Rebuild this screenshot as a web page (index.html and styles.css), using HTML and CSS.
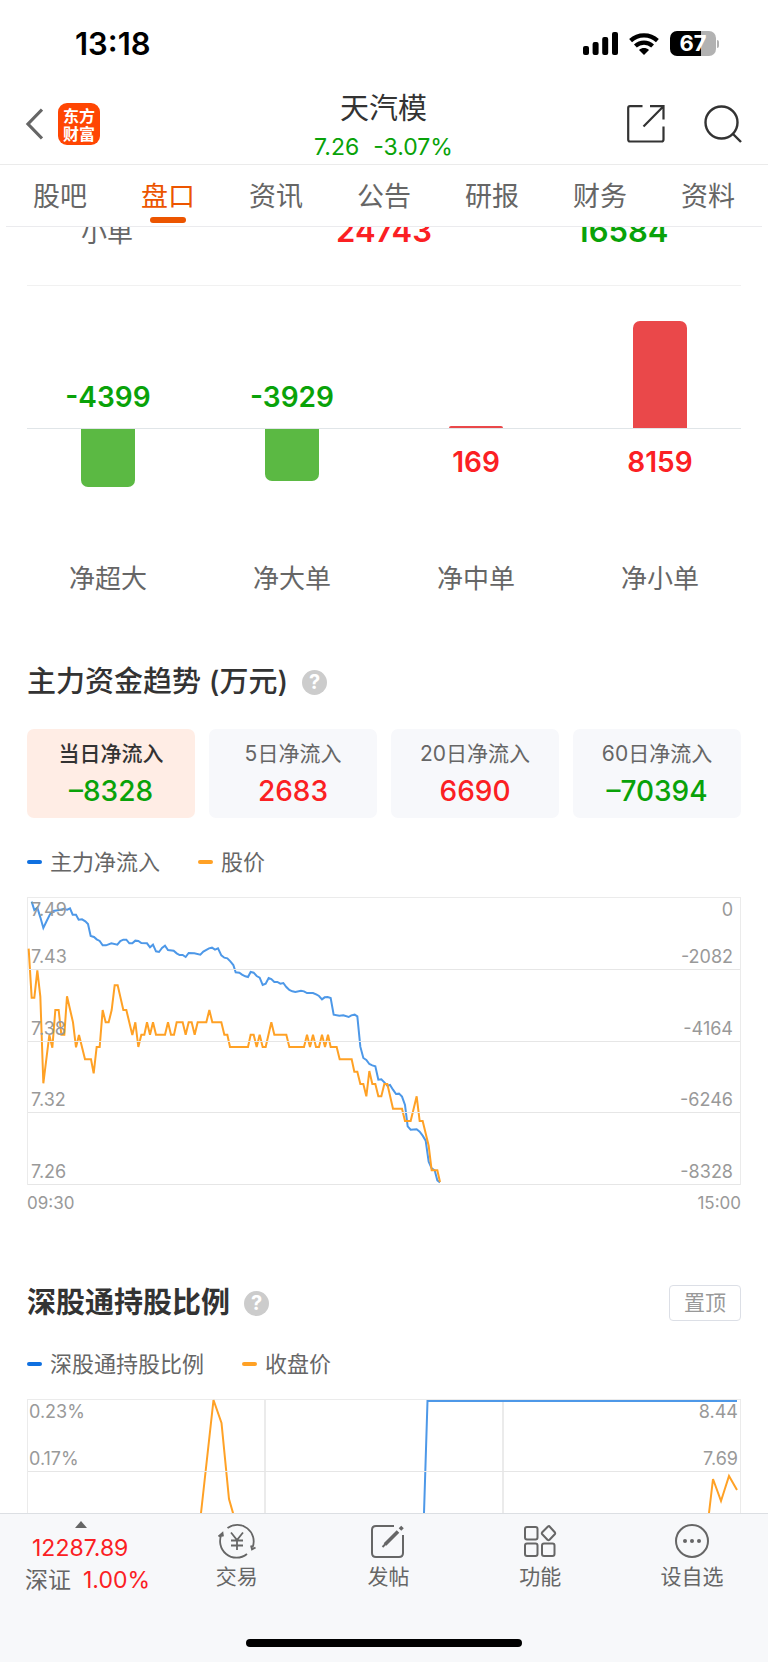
FILE: index.html
```html
<!DOCTYPE html>
<html lang="zh-CN">
<head>
<meta charset="utf-8">
<meta name="viewport" content="width=device-width, initial-scale=1">
<title>天汽模 盘口</title>
<link rel="stylesheet" href="styles.css">
</head>
<body>
<div class="app">
  <div class="status">
    <time class="status-time">13:18</time>
    <div class="status-icons">
      <svg width="35" height="23" viewBox="0 0 35 23" aria-hidden="true">
        <rect x="0" y="14" width="6" height="9" rx="2"/><rect x="9.6" y="10" width="6" height="13" rx="2"/><rect x="19.2" y="5" width="6" height="18" rx="2"/><rect x="29" y="0" width="6" height="23" rx="2"/>
      </svg>
      <svg width="30" height="22" viewBox="0 0 30 22" aria-hidden="true">
        <g fill="none" stroke="#000" stroke-width="4.2"><path d="M1.6 7.6C9 .6 21 .6 28.400 7.6"/><path d="M6.4 13C11.3 8.600 18.700 8.600 23.600 13"/></g>
        <path d="M10 17C13 14.400 17 14.400 20 17L15 22Z"/>
      </svg>
      <div class="battery"><span class="battery-body">67</span><span class="battery-tip"></span></div>
    </div>
  </div>

  <header class="header">
    <div class="header-left">
      <button class="icon-btn" aria-label="返回">
        <svg width="18" height="32" viewBox="0 0 18 32" fill="none" stroke="#666" stroke-width="3.200"><path d="M17 1.500 3 16 17 30.500"/></svg>
      </button>
      <div class="logo">东方<br>财富</div>
    </div>
    <div class="header-title">
      <h1 class="stock-name">天汽模</h1>
      <p class="stock-quote"><span>7.26</span><span>-3.07%</span></p>
    </div>
    <div class="header-right">
      <button class="icon-btn" aria-label="分享">
        <svg width="38" height="38" viewBox="0 0 38 38" fill="none" stroke="#333" stroke-width="2.200"><path d="M15.500 1.200H3Q1.200 1.200 1.200 3V34.500Q1.200 36.500 3 36.500H34.500Q36.500 36.500 36.500 34.500V21.500M23 1.200H36.500V14.500M36.500 1.200 16.500 21.500"/></svg>
      </button>
      <button class="icon-btn" aria-label="搜索">
        <svg width="38" height="38" viewBox="0 0 38 38" fill="none" stroke="#333" stroke-width="2.400"><circle cx="17.500" cy="17.500" r="16"/><path d="M28.500 28.500 37 37"/></svg>
      </button>
    </div>
  </header>

  <nav class="tabs">
    <a class="tab" href="#">股吧</a>
    <a class="tab tab-active" href="#">盘口</a>
    <a class="tab" href="#">资讯</a>
    <a class="tab" href="#">公告</a>
    <a class="tab" href="#">研报</a>
    <a class="tab" href="#">财务</a>
    <a class="tab" href="#">资料</a>
  </nav>

  <main class="content">
    <div class="order-row">
      <span class="order-label">小单</span>
      <span class="order-value up">24743</span>
      <span class="order-value down">16584</span>
    </div>

    <section class="net">
      <div class="net-upper">
        <div class="net-cols">
          <div class="net-cell"><span class="net-value down">-4399</span></div>
          <div class="net-cell"><span class="net-value down">-3929</span></div>
          <div class="net-cell"><span class="bar bar-up" style="height:2px"></span></div>
          <div class="net-cell"><span class="bar bar-up" style="height:107px"></span></div>
        </div>
      </div>
      <div class="net-lower">
        <div class="net-cols">
          <div class="net-cell"><span class="bar bar-down" style="height:58px"></span></div>
          <div class="net-cell"><span class="bar bar-down" style="height:52px"></span></div>
          <div class="net-cell"><span class="net-value up">169</span></div>
          <div class="net-cell"><span class="net-value up">8159</span></div>
        </div>
      </div>
      <div class="net-cols net-names">
        <span>净超大</span><span>净大单</span><span>净中单</span><span>净小单</span>
      </div>
    </section>

    <section class="section">
      <div class="section-head">
        <h2 class="section-title">主力资金趋势 (万元)</h2>
        <button class="help" aria-label="说明">?</button>
      </div>
      <div class="cards">
        <button class="card card-active"><span class="card-label">当日净流入</span><span class="card-value down">–8328</span></button>
        <button class="card"><span class="card-label">5日净流入</span><span class="card-value up">2683</span></button>
        <button class="card"><span class="card-label">20日净流入</span><span class="card-value up">6690</span></button>
        <button class="card"><span class="card-label">60日净流入</span><span class="card-value down">–70394</span></button>
      </div>
      <div class="legend">
        <span class="legend-item key-blue">主力净流入</span>
        <span class="legend-item key-orange">股价</span>
      </div>
      <div class="chart">
        <svg class="chart-lines" viewBox="81 36 2142 864" preserveAspectRatio="none" aria-hidden="true">
          <polyline class="line-blue" points="95,50 103,75 112,68 121,97 130,129 140,108 150,88 160,78 178,75 190,72 202,74 210,70 218,89 228,89 236,104 246,103 256,109 264,117 272,153 282,156 290,163 299,168 308,181 318,181 334,175 352,179 361,168 370,164 379,164 388,175 397,175 406,167 415,168 424,174 441,175 450,187 459,179 468,199 477,201 486,189 495,182 504,195 521,197 530,205 539,210 548,210 557,216 566,204 583,205 601,209 610,200 627,190 636,188 645,194 654,190 664,211 673,218 682,220 691,229 700,240 707,262 718,263 726,269 736,274 744,276 752,261 761,263 770,273 779,278 788,300 797,296 806,279 814,282 823,291 832,291 841,296 850,294 859,306 868,315 877,319 886,321 903,317 912,319 921,324 939,324 950,329 957,333 966,343 974,337 983,336 992,339 1001,389 1018,392 1030,391 1046,396 1054,391 1064,389 1072,394 1081,485 1090,519 1099,525 1108,537 1117,541 1126,544 1135,584 1144,583 1153,592 1162,602 1170,600 1179,614 1188,627 1197,626 1206,635 1215,660 1223,724 1232,734 1250,733 1259,740 1268,752 1277,767 1286,830 1295,850 1304,856 1312,886 1320,892"/>
          <polyline class="line-orange" points="86,191 95,338 103,338 112,256 121,335 130,595 148,450 157,488 166,375 176,375 184,449 193,449 201,334 219,412 228,487 237,450 255,523 273,523 281,565 290,486 299,486 308,375 317,412 326,412 335,375 344,301 353,301 370,375 379,375 397,450 406,412 415,486 424,449 433,449 441,412 450,449 459,412 468,449 495,449 504,412 513,449 522,449 530,412 548,412 557,449 566,412 575,412 584,449 593,412 619,412 628,375 637,412 664,412 673,449 682,449 690,486 744,486 752,449 761,449 770,486 779,449 788,486 797,486 814,412 823,449 859,449 868,486 912,486 921,449 930,486 939,449 948,486 957,486 966,449 975,486 984,449 992,486 1010,486 1019,523 1055,523 1063,560 1072,560 1081,597 1090,597 1099,634 1108,558 1117,597 1126,597 1135,634 1144,634 1153,597 1162,597 1179,671 1206,671 1215,708 1232,708 1250,634 1259,708 1268,708 1286,782 1295,856 1312,856 1320,891"/>
        </svg>
        <div class="chart-row chart-row-first">
          <div class="ticks"><span>7.49</span><span>0</span></div>
          <div class="ticks"><span>7.43</span><span>-2082</span></div>
        </div>
        <div class="chart-row"><div class="ticks"><span>7.38</span><span>-4164</span></div></div>
        <div class="chart-row"><div class="ticks"><span>7.32</span><span>-6246</span></div></div>
        <div class="chart-row"><div class="ticks"><span>7.26</span><span>-8328</span></div></div>
      </div>
      <div class="axis"><span>09:30</span><span>15:00</span></div>
    </section>

    <section class="section">
      <div class="section-head">
        <h2 class="section-title section-title-bold">深股通持股比例</h2>
        <button class="help" aria-label="说明">?</button>
        <button class="pin">置顶</button>
      </div>
      <div class="legend legend-tight">
        <span class="legend-item key-blue">深股通持股比例</span>
        <span class="legend-item key-orange">收盘价</span>
      </div>
      <div class="chart chart-wide">
        <svg class="chart-lines" viewBox="0 0 714 288" preserveAspectRatio="none" aria-hidden="true">
          <path class="line-grid" d="M238 0V288M476 0V288"/>
          <polyline class="line-blue" points="390,220 397,114 400.500,2 710,2"/>
          <polyline class="line-orange" points="160,240 174,114 186.500,1 194.500,24 202,100 206,114 220,240"/>
          <polyline class="line-orange" points="670,240 682,114 686,80 694,102 702,77 710,91"/>
        </svg>
        <div class="chart-row chart-row-first">
          <div class="ticks"><span>0.23%</span><span>8.44</span></div>
          <div class="ticks"><span>0.17%</span><span>7.69</span></div>
        </div>
        <div class="chart-row"></div>
        <div class="chart-row"></div>
        <div class="chart-row"></div>
      </div>
    </section>
  </main>

  <footer class="footer">
    <nav class="toolbar">
      <a class="index" href="#">
        <svg class="index-arrow" width="12" height="7" viewBox="0 0 12 7" fill="#666" aria-hidden="true"><path d="M6 0 12 7H0Z"/></svg>
        <span class="index-value">12287.89</span>
        <span class="index-line">深证<b class="index-change">1.00%</b></span>
      </a>
      <a class="tool" href="#">
        <svg width="40" height="36" viewBox="0 0 40 36" fill="none" stroke="#666" stroke-width="1.800"><path d="M10.500 5A16.500 16.500 0 0 1 35.500 24.500M30 31A16.500 16.500 0 0 1 5 10.500M1.500 13.500 5.500 10 6 13.500M34 22.500 35 26.500 38.500 24.500M14 9.500 20 17 26 9.500M20 17V27M14 17.500H26M14 22.500H26"/></svg>
        <span>交易</span>
      </a>
      <a class="tool" href="#">
        <svg width="36" height="36" viewBox="0 0 36 36" fill="none" stroke="#666" stroke-width="2"><path d="M24 3H6Q2 3 2 7V30Q2 34 6 34H29Q33 34 33 30V12"/><path d="M15 21.500 28 8.500M30 6.500 32.500 4" stroke-width="3.600"/><path d="M12.500 24 16 20.500"/></svg>
        <span>发帖</span>
      </a>
      <a class="tool" href="#">
        <svg width="36" height="36" viewBox="0 0 36 36" fill="none" stroke="#666" stroke-width="2"><rect x="3" y="4" width="12.500" height="12.500" rx="2"/><rect x="3" y="20.500" width="12.500" height="12.500" rx="2"/><rect x="20" y="20.500" width="12.500" height="12.500" rx="2"/><path d="M25.700 3.700Q26.400 3 27.100 3L33 9.500Q33.500 10.200 33 11L27.300 17Q26.500 17.500 25.700 17L20 11Q19.500 10.200 20 9.500Z" stroke-linejoin="round"/></svg>
        <span>功能</span>
      </a>
      <a class="tool" href="#">
        <svg width="36" height="36" viewBox="0 0 36 36" fill="none" stroke="#666" stroke-width="2"><circle cx="18" cy="18" r="16"/><g fill="#666" stroke="none"><circle cx="11" cy="18" r="2"/><circle cx="18" cy="18" r="2"/><circle cx="25" cy="18" r="2"/></g></svg>
        <span>设自选</span>
      </a>
    </nav>
    <div class="home-bar"></div>
  </footer>
</div>
</body>
</html>
```

FILE: styles.css
```css
* { box-sizing: border-box; margin: 0; padding: 0; }
body {
  background: #fff;
  color: #666;
  font-family: Inter, "Noto Sans CJK SC", sans-serif;
}
a { color: inherit; text-decoration: none; }
button { font: inherit; color: inherit; background: none; border: 0; cursor: pointer; }
svg { display: block; flex: none; }

.app { display: flex; flex-direction: column; height: 100vh; }
.up { color: #fb2023; }
.down { color: #09a209; }

.status {
  display: flex;
  align-items: center;
  justify-content: space-between;
  flex: none;
  height: 84px;
  padding: 3px 49px 0 75px;
}
.status-time { color: #000; font-size: 31px; font-weight: 600; }
.status-icons { display: flex; align-items: center; gap: 11px; }
.battery { display: flex; align-items: center; gap: 1px; }
.battery-body {
  width: 46px;
  border-radius: 7px;
  background: linear-gradient(90deg, #000 67%, #b2b2b2 67%);
  color: #fff;
  font-size: 22px;
  font-weight: 700;
  line-height: 25px;
  text-align: center;
}
.battery-tip { width: 2px; height: 8px; border-radius: 0 2px 2px 0; background: #b2b2b2; }

.header {
  display: grid;
  grid-template-columns: 1fr auto 1fr;
  align-items: center;
  flex: none;
  height: 81px;
  padding: 0 26px 0 25px;
  border-bottom: 1px solid #ebebeb;
}
.header-left { display: flex; align-items: center; gap: 15px; }
.header-right { display: flex; align-items: center; justify-content: flex-end; gap: 39px; }
.logo {
  width: 42px;
  height: 42px;
  padding-top: 3px;
  border-radius: 9px;
  background: #ff4603;
  color: #fff;
  font-family: "Noto Sans CJK SC", sans-serif;
  font-size: 16px;
  font-weight: 700;
  line-height: 18px;
  text-align: center;
}
.header-title { padding-top: 3px; text-align: center; }
.stock-name { color: #333; font-size: 29px; font-weight: 400; line-height: 42px; }
.stock-quote {
  display: flex;
  justify-content: center;
  gap: 14px;
  color: #09a209;
  font-size: 23px;
  line-height: 34px;
}

.tabs {
  display: grid;
  grid-template-columns: repeat(7, 1fr);
  flex: none;
  height: 62px;
  margin: 0 6px;
  border-bottom: 1px solid #ebebee;
}
.tab {
  display: flex;
  flex-direction: column;
  align-items: center;
  font-size: 27px;
  line-height: 52px;
  padding-top: 6px;
}
.tab-active { color: #ec5500; }
.tab-active::after {
  content: "";
  flex: none;
  width: 36px;
  height: 6px;
  margin-top: -6px;
  border-radius: 3px;
  background: #ec5500;
}

.content { flex: 1; min-height: 0; overflow: hidden; padding: 0 27px; }

.order-row {
  display: grid;
  grid-template-columns: repeat(3, 1fr);
  align-items: center;
  height: 111px;
  margin-top: -52px;
  border-bottom: 1px solid #f1f1f1;
}
.order-label { padding-left: 54px; font-size: 26px; }
.order-value { font-size: 31px; font-weight: 600; text-align: center; }

.net-upper { height: 143px; border-bottom: 1px solid #e0e5e8; }
.net-lower { height: 135px; }
.net-cols {
  display: grid;
  grid-template-columns: repeat(4, 1fr);
  height: 100%;
  margin: 0 -11px;
  text-align: center;
}
.net-cell { display: flex; flex-direction: column; align-items: center; }
.net-upper .net-cell { justify-content: flex-end; }
.net-value { padding: 18px 0 16px; font-size: 28px; font-weight: 600; line-height: 30px; }
.bar { width: 54px; }
.bar-up { border-radius: 7px 7px 0 0; background: #ea484a; }
.bar-down { border-radius: 0 0 7px 7px; background: #5bb943; }
.net-names { height: auto; font-size: 26px; line-height: 30px; }

.section-head { display: flex; align-items: center; height: 40px; margin-top: 68px; }
.section-title { color: #333; font-size: 29px; font-weight: 500; line-height: 40px; }
.section-title-bold { font-weight: 700; }
.help {
  width: 25px;
  height: 25px;
  margin-left: 14px;
  border-radius: 50%;
  background: #ccc;
  color: #fff;
  font-size: 20px;
  font-weight: 700;
  line-height: 25px;
}
.pin {
  height: 36px;
  margin-left: auto;
  padding: 0 14px;
  border: 1px solid #dcdfe6;
  border-radius: 4px;
  color: #999;
  font-size: 21px;
  line-height: 34px;
}

.cards { display: grid; grid-template-columns: repeat(4, 1fr); gap: 14px; margin-top: 27px; }
.card {
  display: flex;
  flex-direction: column;
  align-items: center;
  height: 89px;
  padding-top: 9px;
  border-radius: 7px;
  background: #f7f8fb;
}
.card-active { background: #ffede5; color: #333; }
.card-label { font-size: 21px; line-height: 32px; }
.card-active .card-label { font-weight: 500; }
.card-value { font-size: 28px; font-weight: 500; line-height: 42px; }

.legend { display: flex; gap: 38px; margin: 29px 0 20px; font-size: 22px; line-height: 30px; }
.legend-tight { margin-top: 26px; }
.legend-item { display: flex; align-items: center; gap: 8px; }
.legend-item::before { content: ""; width: 15px; height: 4px; border-radius: 2px; }
.key-blue::before { background: #0f70e0; }
.key-orange::before { background: #ffa125; }

.chart {
  position: relative;
  display: grid;
  grid-template-rows: repeat(4, 1fr);
  height: 288px;
  border: solid #ebebeb;
  border-width: 1px 1px 0;
  color: #999;
  font-size: 18px;
  line-height: 24px;
}
.chart-lines { position: absolute; inset: -1px; width: calc(100% + 2px); height: calc(100% + 1px); }
.chart-lines > * { fill: none; stroke-width: 2px; vector-effect: non-scaling-stroke; }
.line-blue { stroke: #4d98e8; }
.line-orange { stroke: #ffa125; }
.line-grid { stroke: #ebebeb; }
.chart-row {
  position: relative;
  display: flex;
  flex-direction: column;
  justify-content: flex-end;
  border-bottom: 1px solid #e6e6e6;
}
.chart-row-first { justify-content: space-between; }
.ticks { display: flex; justify-content: space-between; padding: 0 7px 0 3px; }
.chart-wide .ticks { padding: 0 2px 0 1px; }
.axis {
  display: flex;
  justify-content: space-between;
  padding-top: 6px;
  color: #999;
  font-size: 17px;
  line-height: 24px;
}

.footer {
  display: flex;
  flex-direction: column;
  align-items: center;
  justify-content: space-between;
  flex: none;
  height: 149px;
  padding-bottom: 15px;
  border-top: 1px solid #dcdfe3;
  background: #f7f8fa;
}
.toolbar {
  display: grid;
  grid-template-columns: repeat(5, 1fr);
  width: 100%;
  padding: 7px 0 0 9px;
}
.index { display: flex; flex-direction: column; padding-left: 16px; }
.index-arrow { margin-left: 50px; }
.index-value { margin-top: 4px; padding-left: 7px; color: #fb2023; font-size: 23px; line-height: 32px; }
.index-line { display: flex; gap: 12px; font-size: 23px; line-height: 32px; }
.index-change { color: #fb2023; font-weight: 400; }
.tool {
  display: flex;
  flex-direction: column;
  align-items: center;
  gap: 2px;
  padding-top: 2px;
  font-size: 21px;
  line-height: 32px;
}
.home-bar { width: 36%; height: 8px; border-radius: 4px; background: #000; }
```
